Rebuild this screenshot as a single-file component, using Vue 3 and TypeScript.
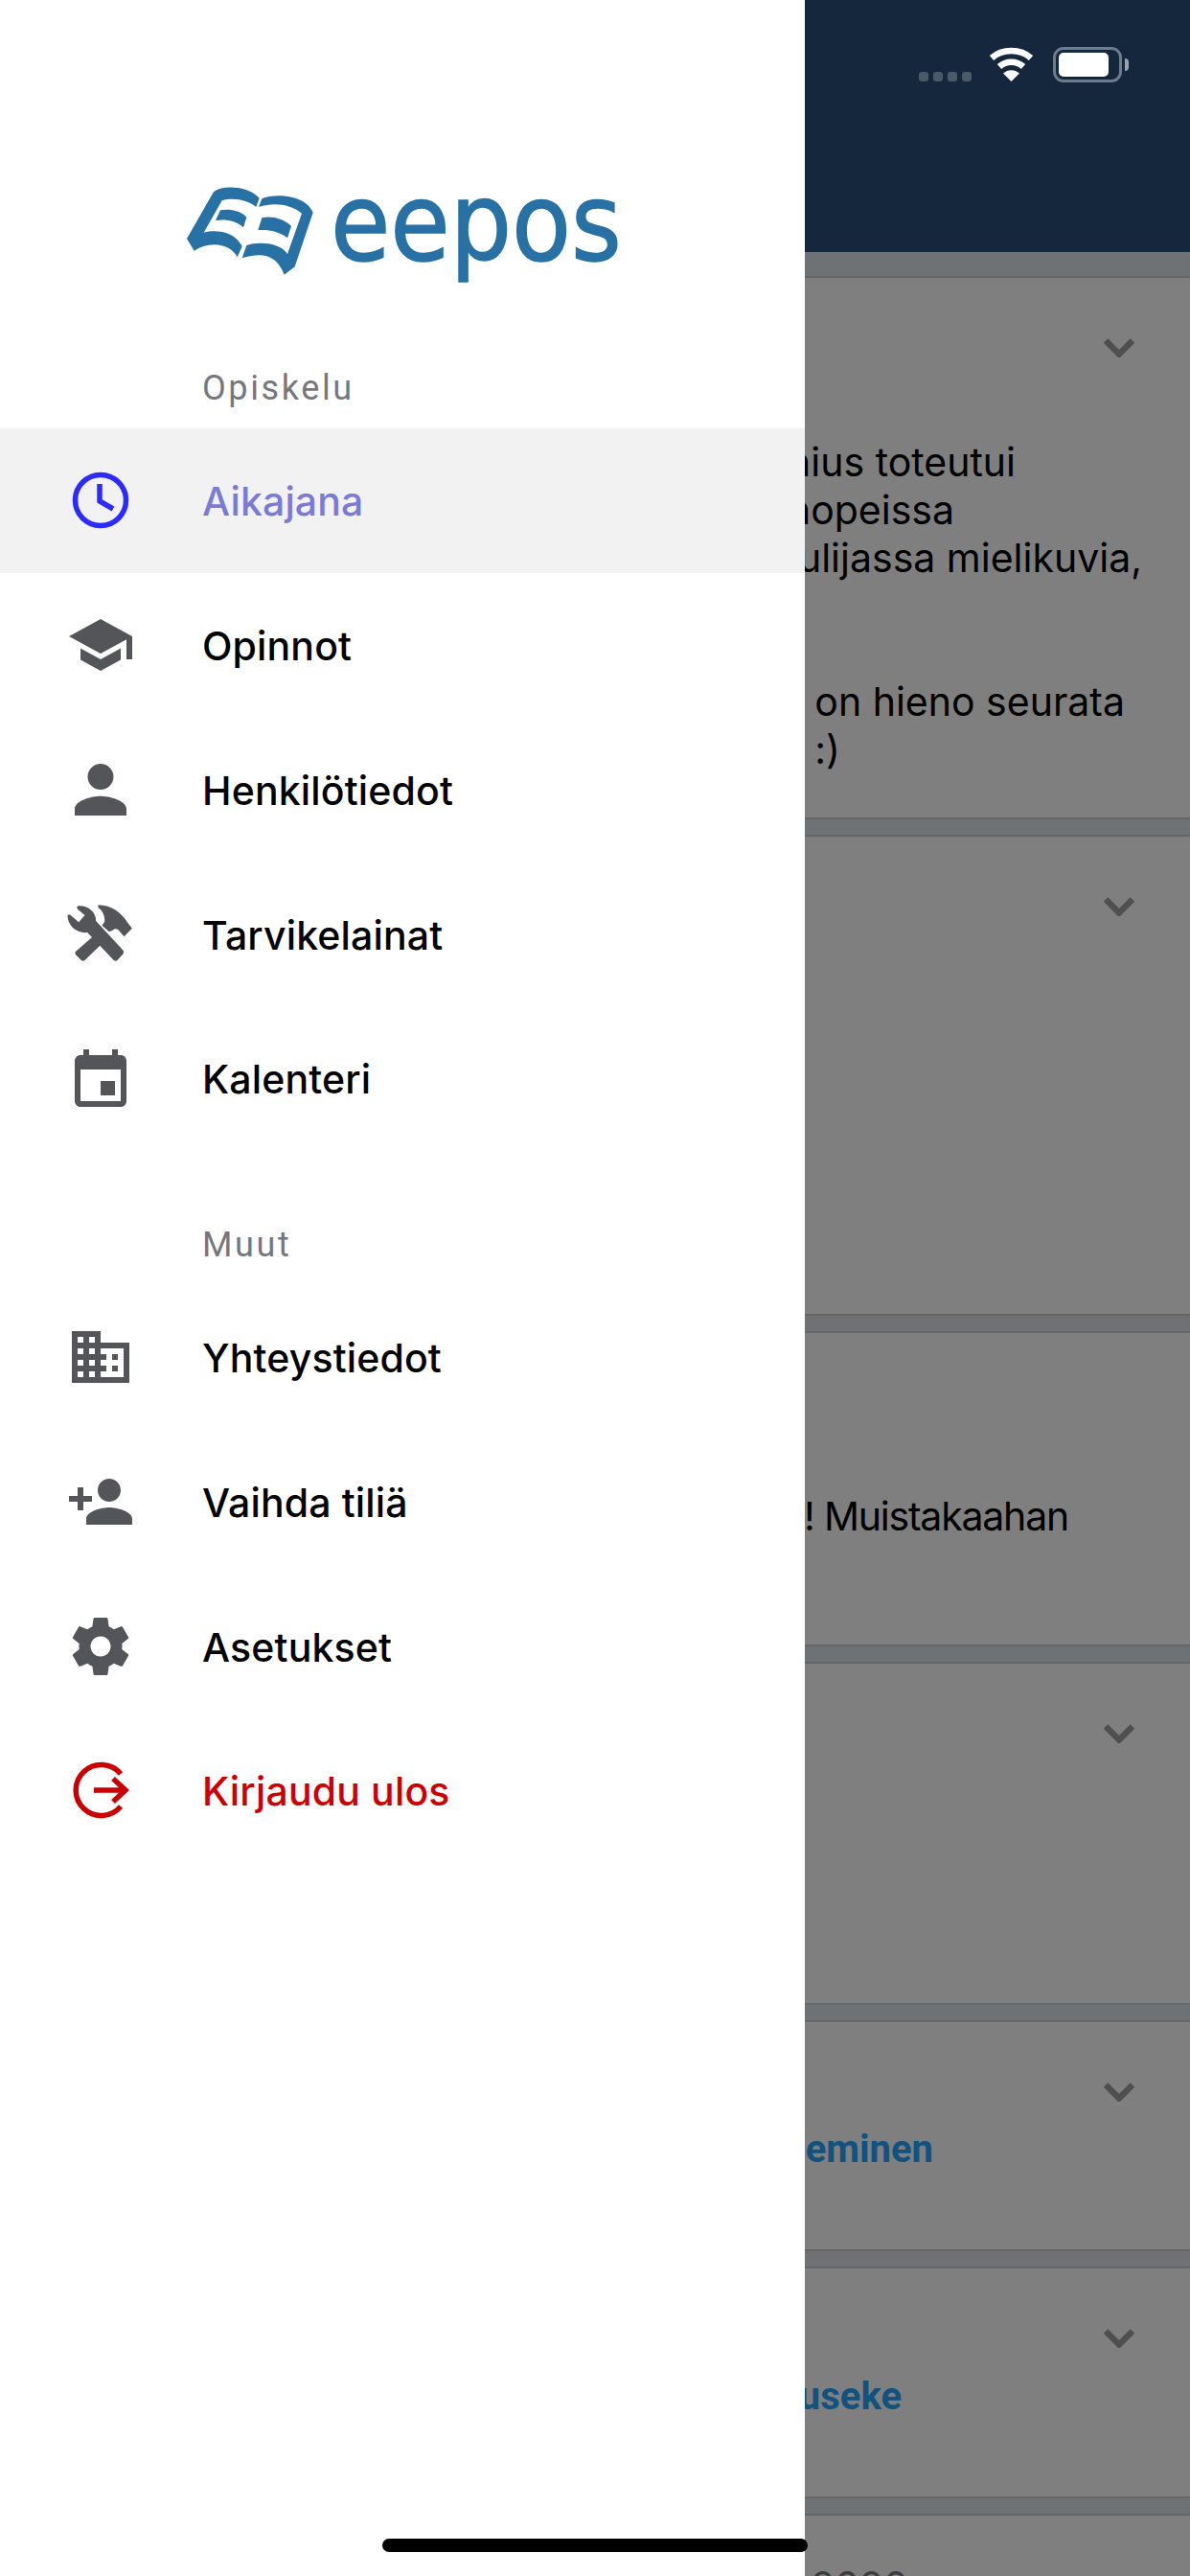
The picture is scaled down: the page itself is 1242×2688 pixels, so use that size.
<template>
  <div class="phone">
    <header class="topbar"></header>

    <main class="feed">
      <article v-for="card in cards" :key="card.id" class="card" :style="{ height: card.height + 'px' }">
        <div class="card-head">
          <svg v-if="card.chevron" class="chevron" viewBox="0 0 32 20">
            <path d="M2 2.5 16 16.5 30 2.5" />
          </svg>
        </div>
        <div class="card-body" :style="{ marginTop: card.offset + 'px' }">
          <p
            v-for="(line, i) in card.lines"
            :key="i"
            class="line"
            :class="line.kind"
            :style="{ width: line.end + 'px' }"
          >
            {{ line.text }}
          </p>
        </div>
      </article>
    </main>

    <div class="scrim"></div>

    <div class="status">
      <div class="dots"><i></i><i></i><i></i><i></i></div>
      <svg class="wifi" viewBox="0 0 47 36">
        <path class="arc" d="M3 11.5C14 1.500 33 1.500 44 11.500" />
        <path class="arc" d="M11 20.500C18 14 29 14 36 20.500" />
        <path class="fan" d="M23.500 36 15 27.500C20 23 27 23 32 27.500Z" />
      </svg>
      <div class="battery">
        <div class="battery-box"><div class="battery-level"></div></div>
        <div class="battery-nub"></div>
      </div>
    </div>

    <nav class="drawer">
      <div class="logo">
        <svg class="logo-mark" viewBox="0 0 510 330">
          <path d="M45 207 128 62C150 40 235 38 272 80L262 108C235 85 190 78 155 88L98 188C140 178 195 185 218 232L203 265C185 225 120 210 68 245Z" />
          <path d="M150 118C180 112 215 120 232 140L222 172C200 150 165 145 135 150Z" />
          <path d="M280 82C320 65 415 68 440 125L383 295 350 320C330 265 290 245 218 268L232 228C270 215 335 218 360 255L405 128C370 100 320 92 270 108Z" />
          <path d="M280 142C310 135 350 145 372 168L360 205C335 185 305 178 268 180Z" />
        </svg>
        <span class="logo-text">eepos</span>
      </div>

      <section v-for="section in sections" :key="section.title" class="section">
        <h3 class="section-title">{{ section.title }}</h3>
        <a
          v-for="item in section.items"
          :key="item.label"
          class="row"
          :class="item.tone"
        >
          <span class="row-icon">
            <svg v-if="item.icon === 'clock'" viewBox="0 0 72 72" class="stroke-icon">
              <circle cx="36" cy="36" r="26.500" />
              <path d="M35 19V37L49 45" />
            </svg>
            <svg v-else-if="item.icon === 'logout'" viewBox="0 0 72 72" class="stroke-icon">
              <path d="M57 19A26.500 26.500 0 1 0 57 53" />
              <path d="M29 36H60M49 24 62 36 49 48" />
            </svg>
            <svg v-else-if="item.icon === 'tools'" viewBox="-16.500 -1 300 270" class="tools">
              <path d="M60 46C88 40 120 62 119 92L205 185Q208 192 203 196L186 215Q180 220 174 214L92 128C62 132 30 110 30 74L37 72 65 96 84 74 60 54Z" />
              <path d="M126 42C168 42 200 68 218 97L232 115 207 141 194 126C188 116 178 114 170 122L160 126 138 106 146 94C148 76 138 58 126 50Z" />
              <path d="M110 140 55 188Q52 193 56 198L72 214Q78 220 84 215L136 165Z" />
            </svg>
            <svg v-else-if="item.icon === 'person'" viewBox="0 0 512 512">
              <path :d="paths.person" />
            </svg>
            <svg v-else-if="item.icon === 'event'" viewBox="0 -1 24 24">
              <path :d="paths.event" />
            </svg>
            <svg v-else viewBox="0 0 24 24">
              <path :d="paths[item.icon]" />
            </svg>
          </span>
          <span class="row-label">{{ item.label }}</span>
        </a>
      </section>
    </nav>

    <div class="home-bar"></div>
  </div>
</template>

<script setup lang="ts">
interface Line {
  text: string
  end: number
  kind?: string
}

interface Card {
  id: number
  height: number
  chevron: boolean
  offset: number
  lines: Line[]
}

interface MenuItem {
  label: string
  icon: string
  tone?: string
}

const cards: Card[] = [
  {
    id: 1,
    height: 567,
    chevron: true,
    offset: 84,
    lines: [
      { text: 'nius toteutui', end: 1060 },
      { text: 'nopeissa', end: 996 },
      { text: 'kuulijassa mielikuvia,', end: 1192 },
      { text: '\u00a0', end: 1190 },
      { text: '\u00a0', end: 1190 },
      { text: 'on hieno seurata', end: 1174 },
      { text: ':)', end: 877 },
    ],
  },
  { id: 2, height: 502, chevron: true, offset: 0, lines: [] },
  {
    id: 3,
    height: 329,
    chevron: false,
    offset: 83,
    lines: [{ text: '! Muistakaahan', end: 1115, kind: 'tight' }],
  },
  { id: 4, height: 358, chevron: true, offset: 0, lines: [] },
  {
    id: 5,
    height: 241,
    chevron: true,
    offset: 25,
    lines: [{ text: 'eminen', end: 974, kind: 'link' }],
  },
  {
    id: 6,
    height: 242,
    chevron: true,
    offset: 26,
    lines: [{ text: 'useke', end: 941, kind: 'link' }],
  },
  {
    id: 7,
    height: 120,
    chevron: false,
    offset: -35,
    lines: [{ text: '2020', end: 948, kind: 'date' }],
  },
]

const sections: { title: string; items: MenuItem[] }[] = [
  {
    title: 'Opiskelu',
    items: [
      { label: 'Aikajana', icon: 'clock', tone: 'active' },
      { label: 'Opinnot', icon: 'school' },
      { label: 'Henkilötiedot', icon: 'person' },
      { label: 'Tarvikelainat', icon: 'tools' },
      { label: 'Kalenteri', icon: 'event' },
    ],
  },
  {
    title: 'Muut',
    items: [
      { label: 'Yhteystiedot', icon: 'domain' },
      { label: 'Vaihda tiliä', icon: 'personAdd' },
      { label: 'Asetukset', icon: 'settings' },
      { label: 'Kirjaudu ulos', icon: 'logout', tone: 'danger' },
    ],
  },
]

const paths: Record<string, string> = {
  school: 'M5 13.18v4L12 21l7-3.82v-4L12 17l-7-3.82zM12 3L1 9l11 6 9-4.91V17h2V9L12 3z',
  person:
    'M256 256c52.805 0 96-43.201 96-96s-43.195-96-96-96-96 43.201-96 96 43.195 96 96 96zm0 48c-63.598 0-192 32.402-192 96v48h384v-48c0-63.598-128.402-96-192-96z',
  event:
    'M17 12h-5v5h5v-5zM16 1v2H8V1H6v2H5c-1.11 0-1.99.9-1.99 2L3 19c0 1.1.89 2 2 2h14c1.1 0 2-.9 2-2V5c0-1.1-.9-2-2-2h-1V1h-2zm3 18H5V8h14v11z',
  domain:
    'M12 7V3H2v18h20V7H12zM6 19H4v-2h2v2zm0-4H4v-2h2v2zm0-4H4V9h2v2zm0-4H4V5h2v2zm4 12H8v-2h2v2zm0-4H8v-2h2v2zm0-4H8V9h2v2zm0-4H8V5h2v2zm10 12h-8v-2h2v-2h-2v-2h2v-2h-2V9h8v10zm-2-8h-2v2h2v-2zm0 4h-2v2h2v-2z',
  personAdd:
    'M15 12c2.21 0 4-1.79 4-4s-1.79-4-4-4-4 1.79-4 4 1.79 4 4 4zm-9-2V7H4v3H1v2h3v3h2v-3h3v-2H6zm9 4c-2.67 0-8 1.34-8 4v2h16v-2c0-2.66-5.33-4-8-4z',
  settings:
    'M19.43 12.98c.04-.32.07-.64.07-.98s-.03-.66-.07-.98l2.11-1.65c.19-.15.24-.42.12-.64l-2-3.46c-.12-.22-.39-.3-.61-.22l-2.49 1c-.52-.4-1.08-.73-1.69-.98l-.38-2.65C14.46 2.18 14.25 2 14 2h-4c-.25 0-.46.18-.49.42l-.38 2.65c-.61.25-1.17.59-1.69.98l-2.49-1c-.23-.09-.49 0-.61.22l-2 3.46c-.13.22-.07.49.12.64l2.11 1.65c-.04.32-.07.65-.07.98s.03.66.07.98l-2.11 1.65c-.19.15-.24.42-.12.64l2 3.46c.12.22.39.3.61.22l2.49-1c.52.4 1.08.73 1.69.98l.38 2.65c.03.24.24.42.49.42h4c.25 0 .46-.18.49-.42l.38-2.65c.61-.25 1.17-.59 1.69-.98l2.49 1c.23.09.49 0 .61-.22l2-3.46c.12-.22.07-.49-.12-.64l-2.11-1.65zM12 15.5c-1.93 0-3.5-1.57-3.5-3.5s1.57-3.5 3.5-3.5 3.5 1.57 3.5 3.5-1.57 3.5-3.5 3.5z',
}
</script>

<style scoped>
.phone {
  position: relative;
  width: 1242px;
  height: 2688px;
  overflow: hidden;
  background: #dce4ea;
  font-family: Inter, "Liberation Sans", sans-serif;
}

.topbar {
  height: 263px;
  background: #2a4e78;
}

.feed {
  display: flex;
  flex-direction: column;
  gap: 16px;
  padding-top: 25px;
}

.card {
  flex: none;
  box-sizing: border-box;
  background: #fff;
  border-top: 2px solid #ccc;
  border-bottom: 2px solid #ccc;
}

.card-head {
  display: flex;
  justify-content: flex-end;
  height: 83px;
  padding: 63px 58px 0 0;
  box-sizing: border-box;
}

.chevron {
  width: 32px;
  height: 20px;
}

.chevron path {
  fill: none;
  stroke: #9e9e9e;
  stroke-width: 6.5;
}

.line {
  margin: 0;
  height: 50px;
  line-height: 50px;
  font-size: 41px;
  color: #000;
  text-align: right;
  white-space: nowrap;
}

.line.tight {
  letter-spacing: -1.200px;
}

.line.link {
  font-family: Roboto, sans-serif;
  font-size: 40px;
  font-weight: 700;
  color: #25a4fe;
}

.line.date {
  color: #7a7a7a;
}

.scrim {
  position: absolute;
  inset: 0;
  background: rgba(0, 0, 0, 0.5);
}

.status {
  position: absolute;
  top: 49px;
  left: 959px;
  display: flex;
  align-items: flex-start;
}

.dots {
  display: flex;
  gap: 5px;
  margin: 26px 18px 0 0;
}

.dots i {
  width: 10px;
  height: 10px;
  border-radius: 3px;
  background: #4a5868;
}

.wifi {
  width: 47px;
  height: 36px;
  margin-right: 20px;
}

.arc {
  fill: none;
  stroke: #fff;
  stroke-width: 6.5;
}

.fan {
  fill: #fff;
}

.battery {
  display: flex;
  align-items: center;
  gap: 3px;
}

.battery-box {
  box-sizing: border-box;
  width: 72px;
  height: 37px;
  padding: 3px;
  border: 3px solid #6e7c8c;
  border-radius: 11px;
}

.battery-level {
  width: 52px;
  height: 25px;
  border-radius: 5px;
  background: #fff;
}

.battery-nub {
  width: 4px;
  height: 13px;
  border-radius: 0 4px 4px 0;
  background: #9aa4ae;
}

.drawer {
  position: absolute;
  top: 0;
  left: 0;
  bottom: 0;
  width: 840px;
  padding-top: 195px;
  box-sizing: border-box;
  background: #fff;
}

.logo {
  display: flex;
  align-items: flex-start;
  height: 183px;
  padding-left: 195px;
}

.logo-mark {
  width: 170px;
  height: 110px;
  margin: -15px 0 0 -15px;
  fill: #2871a5;
}

.logo-text {
  margin: -48px 0 0 -5px;
  font-family: "DejaVu Sans", sans-serif;
  font-size: 112px;
  line-height: 170px;
  color: #2871a5;
  -webkit-text-stroke: 1.500px #2871a5;
  transform: scaleX(0.905);
  transform-origin: left center;
}

.section + .section {
  margin-top: 71px;
}

.section-title {
  margin: 0;
  padding: 2px 0 17px 211px;
  font-family: Roboto, sans-serif;
  font-size: 36px;
  font-weight: 400;
  line-height: 50px;
  letter-spacing: 2.600px;
  color: #77777b;
}

.row {
  display: flex;
  align-items: center;
  gap: 64px;
  height: 150.75px;
  padding-left: 62px;
  font-family: Inter, sans-serif;
  font-size: 41px;
  font-weight: 500;
  letter-spacing: 0.15px;
  color: #000;
}

.row-label {
  padding-top: 2px;
}

.row-icon {
  display: flex;
  flex: none;
  align-items: center;
  justify-content: center;
  width: 85px;
  height: 85px;
}

.row-icon svg {
  flex: none;
  width: 72px;
  height: 72px;
  fill: #545559;
}

.row-icon .tools {
  width: 100px;
  height: 90px;
}

.row-icon .stroke-icon {
  fill: none;
  stroke: currentColor;
  stroke-width: 5.500;
}

.row.active {
  background: #f2f2f2;
  color: #7b7bd6;
}

.row.active .stroke-icon {
  color: #2b2bff;
}

.row.danger {
  color: #cc0000;
}

.home-bar {
  position: absolute;
  left: 399px;
  bottom: 25px;
  width: 444px;
  height: 14px;
  border-radius: 7px;
  background: #000;
}
</style>
